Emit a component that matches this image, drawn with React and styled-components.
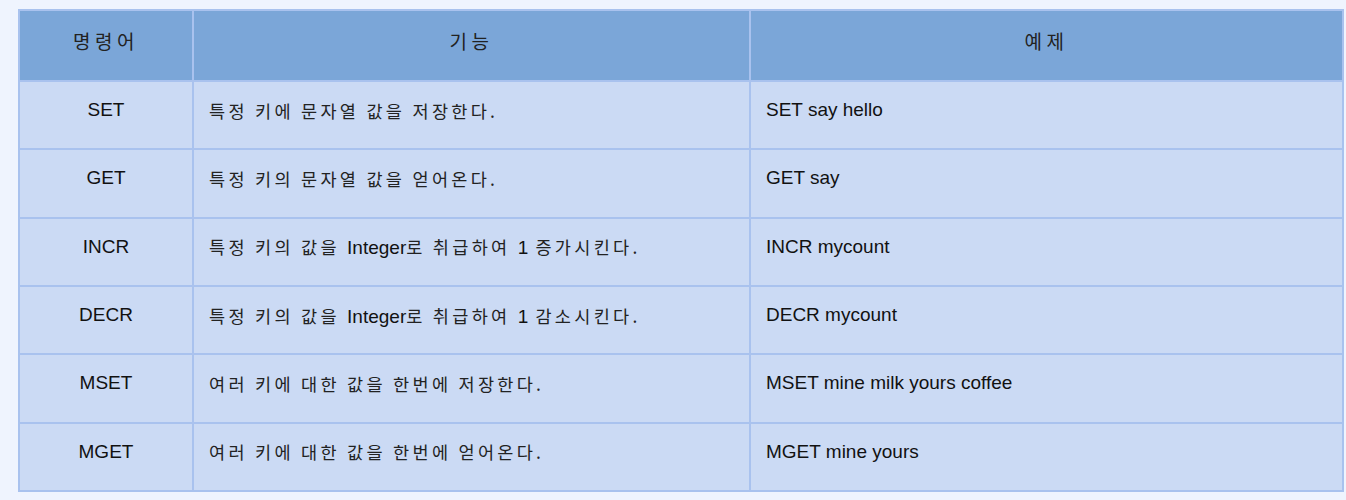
import React from 'react';
import styled, { createGlobalStyle } from 'styled-components';

const GlobalStyle = createGlobalStyle`
  body {
    margin: 0;
    background: #eff4fe;
    font-family: "Liberation Sans", "Noto Sans CJK KR", sans-serif;
  }
`;

const Page = styled.div`
  padding: 9px 0 0 18px;
  height: 500px;
  box-sizing: border-box;
`;

const Table = styled.div`
  display: grid;
  grid-template-columns: 172px 555px 591px;
  grid-template-rows: 69px repeat(6, 1fr);
  gap: 2px;
  padding: 2px;
  width: 1326px;
  height: 483px;
  box-sizing: border-box;
  background: #a9c2ee;
`;

const Cell = styled.div`
  display: flex;
  align-items: center;
  justify-content: ${(p) => (p.$center ? 'center' : 'flex-start')};
  padding: 0 15px 10px;
  background: ${(p) => (p.$head ? '#7ba6d8' : '#cbdaf4')};
  color: #111;
  font-size: 19px;
  white-space: nowrap;
`;

const Korean = styled.span`
  font-family: "Noto Sans CJK KR", "Liberation Sans", sans-serif;
  font-size: ${(p) => (p.$head ? '19px' : '17.5px')};
  letter-spacing: ${(p) => (p.$head ? '4.5px' : '3.3px')};
  word-spacing: 0;
  color: #222;
`;

const Latin = styled.span`
  font-family: "Liberation Sans", sans-serif;
  font-size: 19px;
  letter-spacing: 0;
  word-spacing: 0;
  color: #111;
`;

const rows = [
  { cmd: 'SET', desc: ['특정 키에 문자열 값을 저장한다.'], ex: 'SET say hello' },
  { cmd: 'GET', desc: ['특정 키의 문자열 값을 얻어온다.'], ex: 'GET say' },
  { cmd: 'INCR', desc: ['특정 키의 값을 ', { l: 'Integer' }, '로 취급하여 ', { l: '1' }, ' 증가시킨다.'], ex: 'INCR mycount' },
  { cmd: 'DECR', desc: ['특정 키의 값을 ', { l: 'Integer' }, '로 취급하여 ', { l: '1' }, ' 감소시킨다.'], ex: 'DECR mycount' },
  { cmd: 'MSET', desc: ['여러 키에 대한 값을 한번에 저장한다.'], ex: 'MSET mine milk yours coffee' },
  { cmd: 'MGET', desc: ['여러 키에 대한 값을 한번에 얻어온다.'], ex: 'MGET mine yours' },
];

function Description({ parts }) {
  return (
    <Korean>
      {parts.map((p, i) => (typeof p === 'string' ? p : <Latin key={i}>{p.l}</Latin>))}
    </Korean>
  );
}

export default function App() {
  return (
    <Page>
      <GlobalStyle />
      <Table>
        <Cell $head $center><Korean $head>명령어</Korean></Cell>
        <Cell $head $center><Korean $head>기능</Korean></Cell>
        <Cell $head $center><Korean $head>예제</Korean></Cell>
        {rows.map((r) => (
          <React.Fragment key={r.cmd}>
            <Cell $center>{r.cmd}</Cell>
            <Cell><Description parts={r.desc} /></Cell>
            <Cell>{r.ex}</Cell>
          </React.Fragment>
        ))}
      </Table>
    </Page>
  );
}
